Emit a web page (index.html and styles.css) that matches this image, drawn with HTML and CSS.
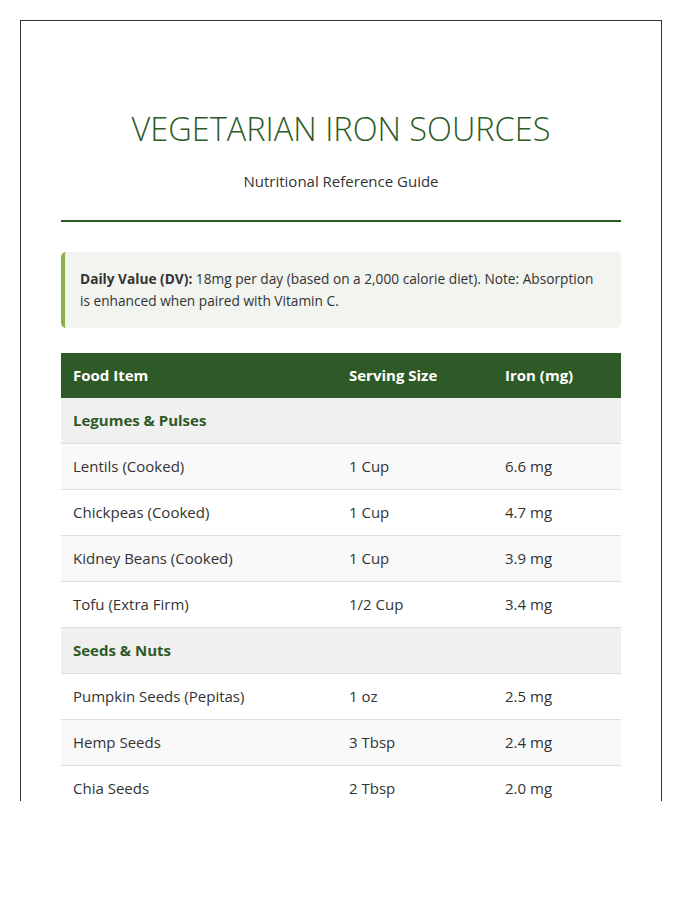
FILE: index.html
```html
<!DOCTYPE html>
<html lang="en">
<head>
<meta charset="utf-8">
<title>Vegetarian Iron Sources</title>
<link rel="stylesheet" href="styles.css">
</head>
<body>
<div class="sheet">
  <header class="header">
    <h1 class="title">VEGETARIAN IRON SOURCES</h1>
    <p class="subtitle">Nutritional Reference Guide</p>
  </header>
  <div class="note">
    <p class="note-text"><strong>Daily Value (DV):</strong> 18mg per day (based on a 2,000 calorie diet). Note: Absorption is enhanced when paired with Vitamin C.</p>
  </div>
  <table class="iron-table">
    <colgroup>
      <col class="col-food">
      <col class="col-serving">
      <col class="col-iron">
    </colgroup>
    <thead>
      <tr><th>Food Item</th><th>Serving Size</th><th>Iron (mg)</th></tr>
    </thead>
    <tbody>
      <tr class="category"><td colspan="3">Legumes &amp; Pulses</td></tr>
      <tr><td>Lentils (Cooked)</td><td>1 Cup</td><td>6.6 mg</td></tr>
      <tr><td>Chickpeas (Cooked)</td><td>1 Cup</td><td>4.7 mg</td></tr>
      <tr><td>Kidney Beans (Cooked)</td><td>1 Cup</td><td>3.9 mg</td></tr>
      <tr><td>Tofu (Extra Firm)</td><td>1/2 Cup</td><td>3.4 mg</td></tr>
      <tr class="category"><td colspan="3">Seeds &amp; Nuts</td></tr>
      <tr><td>Pumpkin Seeds (Pepitas)</td><td>1 oz</td><td>2.5 mg</td></tr>
      <tr><td>Hemp Seeds</td><td>3 Tbsp</td><td>2.4 mg</td></tr>
      <tr><td>Chia Seeds</td><td>2 Tbsp</td><td>2.0 mg</td></tr>
    </tbody>
  </table>
</div>
</body>
</html>
```

FILE: styles.css
```css
html, body {
  margin: 0;
  padding: 0;
  background: #ffffff;
}

body {
  padding: 20px;
  font-family: "Open Sans", "Noto Sans", "Liberation Sans", sans-serif;
  color: #333333;
}

.sheet {
  box-sizing: border-box;
  width: 642px;
  height: 781px;
  overflow: hidden;
  border: 1px solid #333333;
  border-bottom: none;
  padding: 40px 40px 0;
  background: #ffffff;
}

.header {
  text-align: center;
  padding-top: 46px;
  padding-bottom: 28px;
  border-bottom: 2px solid #2d5a27;
}

.title {
  margin: 0;
  font-size: 32.5px;
  font-weight: 300;
  line-height: 44px;
  letter-spacing: 0;
  color: #2d5a27;
}

.subtitle {
  margin: 19px 0 0;
  font-size: 15px;
  line-height: 22px;
  color: #333333;
}

.note {
  margin-top: 30px;
  background: #f1f4ef;
  border-left: 4px solid #8bb24a;
  border-radius: 5px;
  padding: 16px 20px 16px 15px;
}

.note-text {
  margin: 0;
  font-size: 13.7px;
  line-height: 22px;
  color: #333333;
}

.note-text strong {
  font-weight: 700;
}

.iron-table {
  margin-top: 25px;
  width: 560px;
  border-collapse: collapse;
  table-layout: fixed;
  font-size: 15px;
}

.col-food { width: 276px; }
.col-serving { width: 156px; }
.col-iron { width: 128px; }

.iron-table th {
  background: #2d5a27;
  color: #ffffff;
  font-weight: 700;
  text-align: left;
  padding: 12px 12px;
  line-height: 21px;
}

.iron-table td {
  padding: 12px 12px;
  line-height: 21px;
  border-bottom: 1px solid #dddddd;
  color: #333333;
}

.iron-table tbody tr:nth-child(even) td {
  background: #f9f9f9;
}

.iron-table tbody tr.category td {
  background: #f0f0f0;
  color: #2d5a27;
  font-weight: 700;
}
```
